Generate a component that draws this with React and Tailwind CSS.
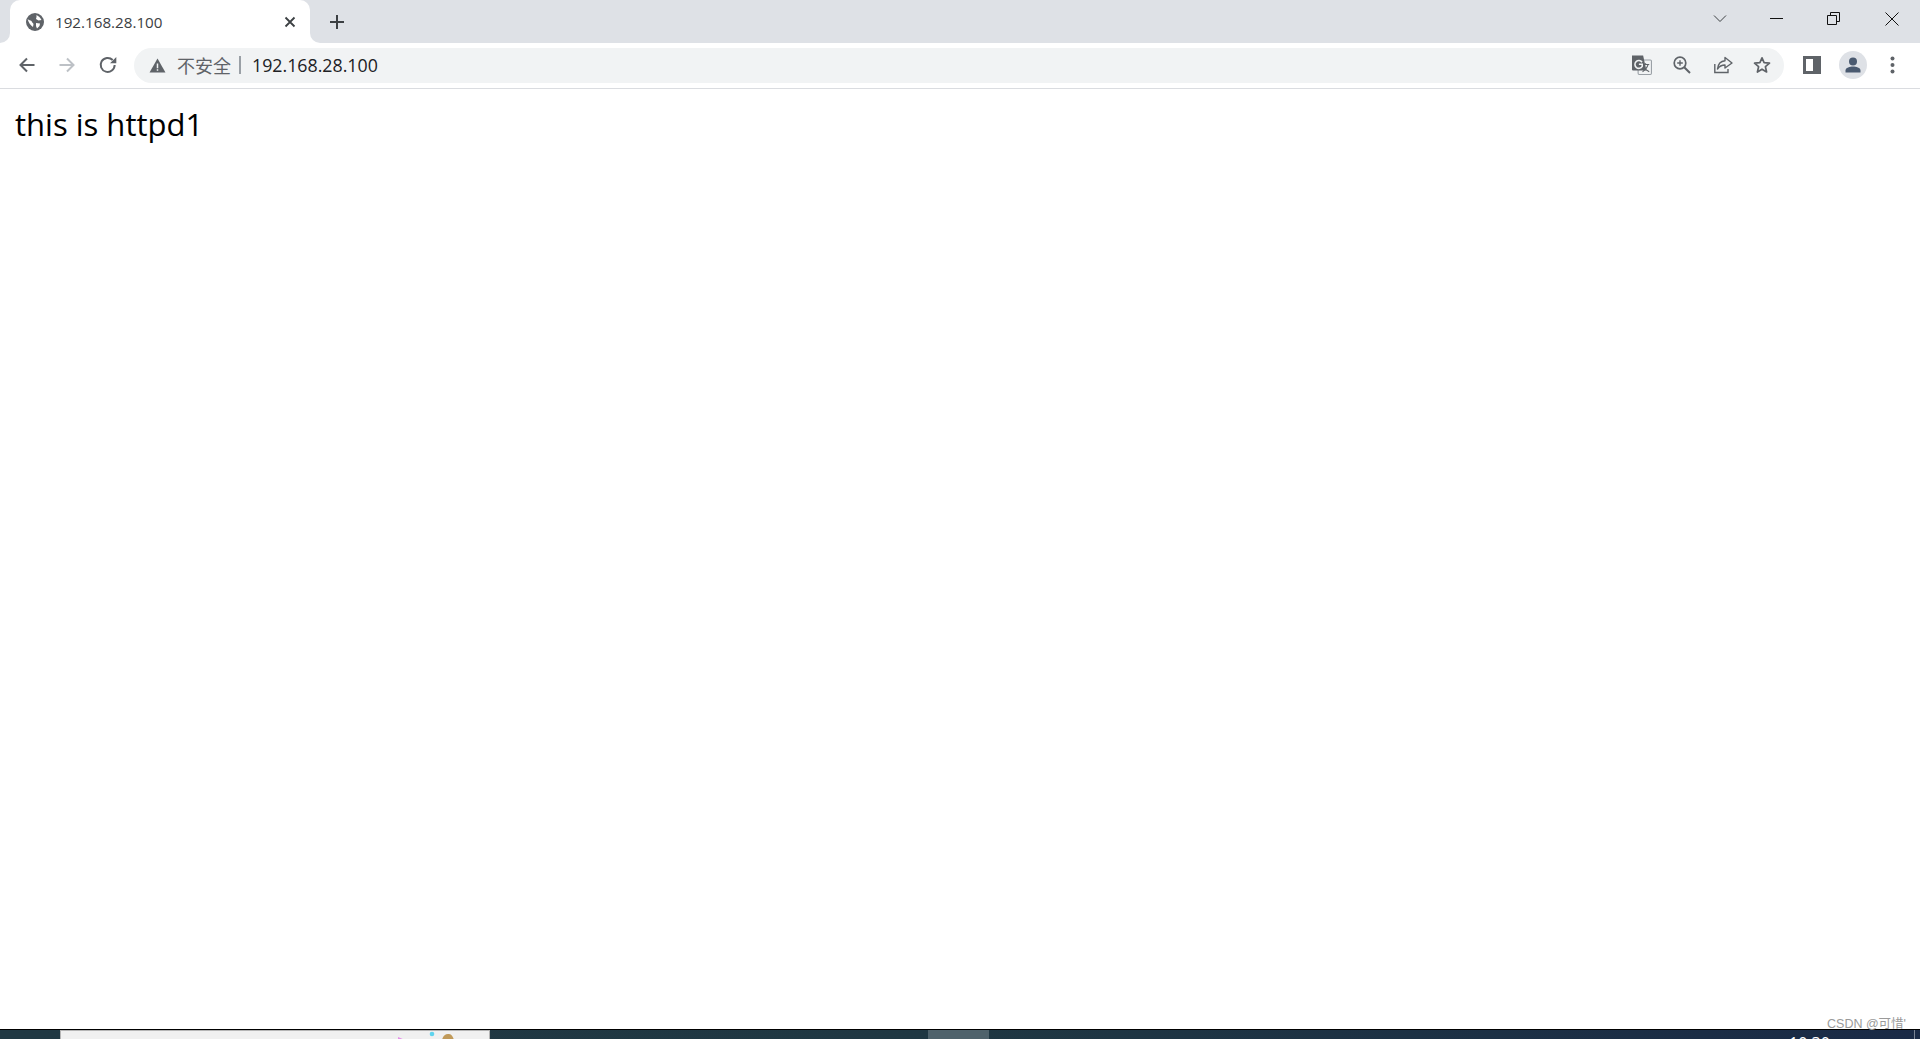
import React from "react";

const cjk = { fontFamily: '"Open Sans","Noto Sans CJK SC",sans-serif' };

function Globe() {
  return (
    <svg width="18" height="18" viewBox="0 0 18 18">
      <circle cx="9" cy="9" r="9" fill="#5f6368" />
      <path d="M1.6 6 C3 7 4 7.5 5.5 8 C6 9.5 7 10 7.5 11 L7 14 C4.5 12.5 2.5 9.5 1.6 6Z" fill="#fff" />
      <path d="M10.5 2 C12.5 3 14.5 4.8 15.5 7 L12.5 7.5 L10 6 L10.5 4Z M10 10 L14 10.5 L13.5 13 L11 15.5 L10 13Z" fill="#fff" />
    </svg>
  );
}

function Tab() {
  return (
    <div className="relative ml-[10px] flex h-[43px] w-[300px] items-center rounded-t-[10px] bg-white pl-[16px]">
      <span className="absolute bottom-0 left-[-10px] h-[10px] w-[10px] bg-white">
        <span className="block h-full w-full rounded-br-[10px] bg-[#dee1e6]" />
      </span>
      <span className="absolute bottom-0 right-[-10px] h-[10px] w-[10px] bg-white">
        <span className="block h-full w-full rounded-bl-[10px] bg-[#dee1e6]" />
      </span>
      <Globe />
      <span className="ml-[11px] mt-[2px] text-[15.2px] leading-none text-[#3c4043]" style={cjk}>192.168.28.100</span>
      <svg className="absolute left-[274px] top-[16px]" width="12" height="12" viewBox="0 0 12 12">
        <path d="M1.5 1.5 L10.5 10.5 M10.5 1.5 L1.5 10.5" stroke="#3c4043" strokeWidth="1.8" />
      </svg>
    </div>
  );
}

function TitleBar() {
  return (
    <div className="flex h-[43px] items-start bg-[#dee1e6]">
      <Tab />
      <svg className="ml-[19px] mt-[14px]" width="16" height="16" viewBox="0 0 16 16">
        <path d="M8 1 V15 M1 8 H15" stroke="#3c4043" strokeWidth="2" />
      </svg>
      <div className="ml-auto flex items-start">
        <svg className="mr-[43px] mt-[14px]" width="14" height="9" viewBox="0 0 14 9">
          <path d="M1 1.5 L7 7.5 L13 1.5" stroke="#3c4043" strokeWidth="1" fill="none" />
        </svg>
        <div className="mr-[44px] mt-[18px] h-px w-[13px] bg-[#111]" />
        <svg className="mr-[45px] mt-[12px]" width="13" height="13" viewBox="0 0 13 13">
          <path d="M0.5 3.5 H9.5 V12.5 H0.5 Z M3.5 3.5 V0.5 H12.5 V9.5 H9.5" stroke="#111" fill="none" />
        </svg>
        <svg className="mr-[21px] mt-[12px]" width="14" height="14" viewBox="0 0 14 14">
          <path d="M0.5 0.5 L13.5 13.5 M13.5 0.5 L0.5 13.5" stroke="#111" strokeWidth="1" />
        </svg>
      </div>
    </div>
  );
}

function Toolbar() {
  return (
    <div className="flex h-[46px] items-center border-b border-[#dadce0] bg-white pb-[1px]">
      <svg className="ml-[19px]" width="16" height="16" viewBox="0 0 16 16">
        <path d="M15.5 8 H1.8 M8 1.5 L1.5 8 L8 14.5" stroke="#5f6368" strokeWidth="2" fill="none" />
      </svg>
      <svg className="ml-[24px]" width="16" height="16" viewBox="0 0 16 16">
        <path d="M0.5 8 H14.2 M8 1.5 L14.5 8 L8 14.5" stroke="#bdc1c6" strokeWidth="2" fill="none" />
      </svg>
      <svg className="ml-[23px]" width="20" height="20" viewBox="0 0 18 18">
        <path d="M15 9 A6.3 6.3 0 1 1 13.2 4.5" stroke="#5f6368" strokeWidth="1.8" fill="none" />
        <path d="M16.5 1.8 V7.5 H10.8 Z" fill="#5f6368" />
      </svg>
      <div className="ml-[16px] flex h-[35px] w-[1650px] items-center rounded-full bg-[#f1f3f4] pl-[15px]">
        <svg width="17" height="15" viewBox="0 0 16 14">
          <path d="M8 0.5 L15.5 13.5 H0.5 Z" fill="#5f6368" />
          <path d="M7.3 5 H8.7 V9.5 H7.3 Z M7.3 10.5 H8.7 V12 H7.3 Z" fill="#f1f3f4" />
        </svg>
        <span className="ml-[11px] mt-[1px] text-[18px] leading-none text-[#5f6368]" style={cjk}>不安全</span>
        <span className="ml-[8px] h-[18px] w-[2px] bg-[#9aa0a6]" />
        <span className="ml-[11px] mt-[1px] text-[17.8px] leading-none text-[#202124]" style={cjk}>192.168.28.100</span>
        <div className="ml-auto flex items-center">
          <svg width="20" height="20" viewBox="0 0 18 18">
            <rect x="5.5" y="4.5" width="12" height="13" rx="1" fill="#f1f3f4" stroke="#9aa0a6" />
            <path d="M9 8.5 H15.5 M12.2 7.5 V8.5 M14.5 8.5 C13.8 11 12 13.5 9.5 15 M10.5 10.5 C11.5 12.5 13 14 15.5 15" stroke="#5f6368" strokeWidth="1" fill="none" />
            <path d="M0 0.5 H10 L13 14 H1 A1 1 0 0 1 0 13 Z" fill="#5f6368" />
            <path d="M9 6.5 A3.5 3.5 0 1 0 9.2 10.2 V8.3 H6.2" stroke="#f1f3f4" strokeWidth="1.4" fill="none" />
          </svg>
          <svg className="ml-[21px]" width="18" height="18" viewBox="0 0 18 18">
            <circle cx="7" cy="7" r="5.8" stroke="#5f6368" strokeWidth="1.7" fill="none" />
            <path d="M4.2 7 H9.8 M7 4.2 V9.8" stroke="#5f6368" strokeWidth="1.4" />
            <path d="M11.2 11.2 L17 17" stroke="#5f6368" strokeWidth="2" />
          </svg>
          <svg className="ml-[23px]" width="19" height="18" viewBox="0 0 19 18">
            <path d="M0.8 8 V16.5 H14 V13" stroke="#5f6368" strokeWidth="1.4" fill="none" />
            <path d="M11 1.5 L18 7 L11 12 V9 C8 9 5.5 10 3.5 13 C4 8.5 6.5 5 11 4.7 Z" stroke="#5f6368" strokeWidth="1.4" fill="none" strokeLinejoin="round" />
          </svg>
          <svg className="ml-[20px]" width="18" height="18" viewBox="0 0 18 18">
            <path d="M9 1.8 L11.1 6.7 L16.5 7.2 L12.4 10.7 L13.6 16 L9 13.2 L4.4 16 L5.6 10.7 L1.5 7.2 L6.9 6.7 Z" stroke="#5f6368" strokeWidth="1.7" fill="none" strokeLinejoin="round" />
          </svg>
          <span className="w-[13px]" />
        </div>
      </div>
      <div className="ml-[19px] flex h-[18px] w-[18px] justify-start border-[3px] border-r-[8px] border-[#5f6368] bg-white" />
      <div className="ml-[18px] flex h-[28px] w-[28px] items-center justify-center rounded-full bg-[#dee1e6]">
        <svg width="16" height="16" viewBox="0 0 16 16">
          <circle cx="8" cy="4.5" r="4" fill="#4a5a70" />
          <path d="M0.5 15.5 V13.5 C0.5 10.5 5 9.5 8 9.5 C11 9.5 15.5 10.5 15.5 13.5 V15.5 Z" fill="#4a5a70" />
        </svg>
      </div>
      <svg className="ml-[23px]" width="5" height="18" viewBox="0 0 5 18">
        <circle cx="2.5" cy="2.5" r="2" fill="#5f6368" />
        <circle cx="2.5" cy="9" r="2" fill="#5f6368" />
        <circle cx="2.5" cy="15.5" r="2" fill="#5f6368" />
      </svg>
    </div>
  );
}

function Taskbar() {
  return (
    <div className="relative flex h-[10px] shrink-0 overflow-hidden border-t border-black bg-gradient-to-r from-[#203843] via-[#1f3742] to-[#1a2a46]">
      <div className="ml-[60px] flex h-full w-[430px] justify-start border-x border-[#b5b5b5] border-t bg-[#f0f0f0]">
        <svg className="ml-[335px]" width="60" height="9" viewBox="0 0 60 9">
          <path d="M2 6 L9 9 H2 Z" fill="#e58ee8" />
          <circle cx="36" cy="3" r="2.3" fill="#5fd4ee" />
          <path d="M46 9 C47 4 50 2.5 53 3 C56 3.5 57 6 58 9 Z" fill="#c09a5a" />
        </svg>
      </div>
      <div className="ml-[438px] h-full w-[61px] bg-[#4f626b]" />
      <span className="ml-[800px] mt-[5px] text-[16px] leading-none text-white" style={cjk}>10:30</span>
      <div className="absolute right-[5px] top-0 h-full w-px bg-[#7a8494]" />
    </div>
  );
}

export default function App() {
  return (
    <div className="relative flex h-screen flex-col overflow-hidden bg-white" style={{ fontFamily: '"Open Sans",sans-serif' }}>
      <TitleBar />
      <Toolbar />
      <main className="flex-1 pl-[15px] pt-[15px]">
        <p className="text-[31px] leading-[40px] text-black" style={{ fontFamily: '"Open Sans","Noto Sans",sans-serif' }}>this is httpd1</p>
      </main>
      <Taskbar />
      <span className="absolute bottom-[9px] right-[14px] text-[12.5px] leading-none text-[#9a9a9a]" style={{ fontFamily: '"Liberation Sans","Noto Sans CJK SC",sans-serif' }}>CSDN @可惜'</span>
    </div>
  );
}
